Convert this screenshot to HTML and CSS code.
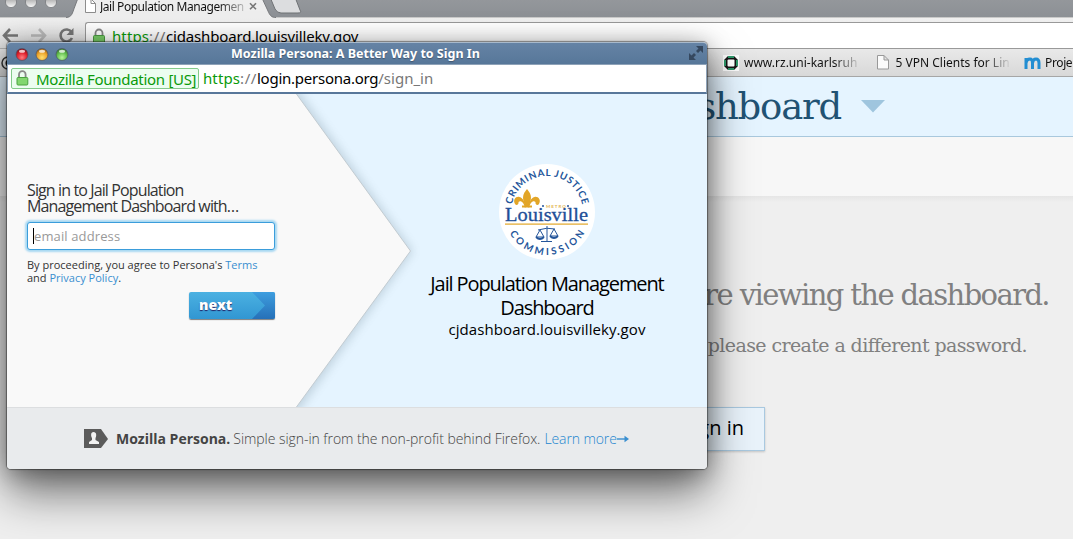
FILE: index.html
```
<!DOCTYPE html>
<html lang="en">
<head>
<meta charset="utf-8">
<title>Jail Population Management Dashboard</title>
<link rel="stylesheet" href="styles.css">
</head>
<body>
<div class="browser">
  <div class="tabstrip">
    <svg width="320" height="18" viewBox="0 0 320 18">
      <defs><linearGradient id="ball" x1="0" y1="0" x2="0" y2="1"><stop offset="0" stop-color="#999"/><stop offset="1" stop-color="#fafafa"/></linearGradient></defs>
      <path d="M66 18 C72 17 72 14 75 6 L78 -2 H262 L269 13 C271 17 273 18 276 18 Z" fill="#eee"/>
      <path d="M66 17.5 C72 17 72 14 75 6 L78 -2 M262 -2 L268 11 C270 16 272 17.500 276 17.500" fill="none" stroke="#77797c"/>
      <path d="M270 -3 L275 9 Q277 13 281 13 H298 Q302 13 300 10 L295 -3 Z" fill="#dcdddf" stroke="#6f7275"/>
      <g fill="url(#ball)" stroke="#777a7d" stroke-width=".8"><circle cx="11" cy="2" r="5.600"/><circle cx="31" cy="2" r="5.600"/><circle cx="51" cy="2" r="5.600"/></g>
      <path d="M85.500 -2 V12.500 H95.500 V3.500 L91 -1 V3.500 H95.500" fill="#fff" stroke="#8d8d8d"/>
      <path d="M250 3.300 L256 9.300 M256 3.300 L250 9.300" stroke="#777" stroke-width="1.600"/>
    </svg>
    <span class="tab-title">Jail Population Managemen</span>
  </div>
  <div class="toolbar">
    <svg class="nav" width="85" height="30" viewBox="0 0 85 30">
      <path d="M4 16.500 H18 M10 10 L4 16.500 L10 23" fill="none" stroke="#777" stroke-width="2.600"/>
      <path d="M31 16.500 H45 M39 10 L45 16.500 L39 23" fill="none" stroke="#bbb" stroke-width="2.600"/>
      <path d="M71.500 13 A6 6 0 1 0 72 19" fill="none" stroke="#777" stroke-width="2.600"/><path d="M73.500 9 V16 H66.500 Z" fill="#777"/>
    </svg>
    <div class="omnibox">
      <svg width="14" height="17" viewBox="0 0 14 17"><path d="M3.500 8 V5 a3.500 3.500 0 0 1 7 0 V8" fill="none" stroke="#888" stroke-width="1.800"/><rect x="1.500" y="7.500" width="11" height="8" rx="1" fill="#7bd069" stroke="#4c9c43"/></svg>
      <span class="address"><i class="secure">https</i><i class="dim">://</i>cjdashboard.louisvilleky.gov</span>
    </div>
  </div>
  <div class="bookmarks">
    <svg class="dial" width="14" height="16" viewBox="0 0 14 16"><circle cx="8" cy="8" r="6" fill="#ddd" stroke="#333" stroke-width="1.500"/><circle cx="9" cy="8" r="3.500" fill="#111"/></svg>
    <svg class="fav-ring" width="16" height="16" viewBox="0 0 16 16"><path d="M0 0H16V16H0Z" fill="#fafafa"/><path d="M5 1H11L15 5V11L11 15H5L1 11V5Z" fill="#151515"/><path d="M5 1H11V3H5ZM1 5H3V11H1ZM13 5H15V11H13ZM5 13H11V15H5Z" fill="#2c9568"/><rect x="4.500" y="4.500" width="7" height="7" rx="1" fill="#fff"/></svg>
    <span class="bm bm-uni">www.rz.uni-karlsruh</span>
    <svg class="fav-page" width="12" height="15" viewBox="0 0 12 15"><path d="M.5 .5 H7 L11.500 5 V14 H.5 Z M7 .5 V5 H11.500" fill="#fbfbfb" stroke="#999"/></svg>
    <span class="bm bm-vpn">5 VPN Clients for Lin</span>
    <svg class="fav-m" width="17" height="12" viewBox="0 0 17 12"><path d="M2 12 V1 M2 6 Q2.500 2 6 2 Q8.500 2 8.500 6 V12 M8.500 6 Q9 2 12 2 Q15 2 15 6 V12" fill="none" stroke="#238ed2" stroke-width="3"/></svg>
    <span class="bm bm-proj">Proje</span>
  </div>
  <div class="site">
    <div class="site-head">
      <span class="site-title">Dashboard</span>
      <svg width="24" height="13" viewBox="0 0 24 13"><path d="M0 0H24L12 12.500Z" fill="#9fc5de"/></svg>
    </div>
    <div class="subhead"></div>
    <div class="site-body">
      <p class="lead">are viewing the dashboard.</p>
      <p class="note">please create a different password.</p>
      <div class="site-button">Sign in</div>
    </div>
  </div>
</div>

<div class="popup">
  <div class="titlebar">
    <svg class="lights" width="62" height="22" viewBox="0 0 62 22">
      <defs>
        <radialGradient id="r" cx=".5" cy=".75" r=".7"><stop offset="0" stop-color="#ff7d80"/><stop offset=".6" stop-color="#e0202c"/><stop offset="1" stop-color="#8e1018"/></radialGradient>
        <radialGradient id="y" cx=".5" cy=".75" r=".7"><stop offset="0" stop-color="#ffe070"/><stop offset=".6" stop-color="#eea52c"/><stop offset="1" stop-color="#a56612"/></radialGradient>
        <radialGradient id="g" cx=".5" cy=".75" r=".7"><stop offset="0" stop-color="#b8f59a"/><stop offset=".6" stop-color="#63bf4e"/><stop offset="1" stop-color="#3c7f30"/></radialGradient>
      </defs>
      <g stroke="#4a5568" stroke-width=".7"><circle cx="15" cy="11.500" r="6" fill="url(#r)"/><circle cx="35" cy="11.500" r="6" fill="url(#y)"/><circle cx="55" cy="11.500" r="6" fill="url(#g)"/></g>
      <g fill="#fff" opacity=".75"><ellipse cx="15" cy="8.200" rx="3" ry="1.500"/><ellipse cx="35" cy="8.200" rx="3" ry="1.500"/><ellipse cx="55" cy="8.200" rx="3" ry="1.500"/></g>
    </svg>
    <span class="popup-title">Mozilla Persona: A Better Way to Sign In</span>
    <svg class="expand" width="16" height="16" viewBox="0 0 16 16"><path d="M8 1H15V8L12.500 5.500L10 8L8 6L10.500 3.500Z M1 8L3.500 10.500L6 8L8 10L5.500 12.500L8 15H1Z" fill="#35485f"/></svg>
  </div>
  <div class="urlbar">
    <div class="cert">
      <svg width="13" height="16" viewBox="0 0 13 16"><path d="M3 8 V4.500 a3.300 3.300 0 0 1 6.600 0 V8" fill="none" stroke="#888" stroke-width="1.800"/><rect x="1" y="7.500" width="10.800" height="7.500" rx="1" fill="#83d770" stroke="#4aa240"/></svg>
      <span>Mozilla Foundation [US]</span>
    </div>
    <span class="popup-address"><i class="secure">https</i><i class="dim">://</i>login.persona.org<i class="path">/sign_in</i></span>
  </div>
  <div class="content">
    <svg class="arrow" width="700" height="313" viewBox="0 0 700 313">
      <defs><filter id="soft" x="-10%" y="-10%" width="120%" height="120%"><feGaussianBlur stdDeviation="5"/></filter></defs>
      <path d="M0 -4H291L406 157L291 318H0Z" fill="#557080" opacity=".24" filter="url(#soft)"/>
      <path d="M-1 -2H288L403.500 157L288 315H-1Z" fill="#f9f9f9" stroke="#c3ccd2"/>
    </svg>
    <div class="form">
      <h1>Sign in to Jail Population<br>Management Dashboard with…</h1>
      <div class="field"><span class="caret"></span><span>email address</span></div>
      <p class="terms">By proceeding, you agree to Persona's <a>Terms</a><br>and <a>Privacy Policy</a>.</p>
      <div class="next"><span>next</span><svg width="26" height="27" viewBox="0 0 26 27"><defs><linearGradient id="nb" x1="0" y1="0" x2="0" y2="1"><stop offset="0" stop-color="#3e9edf"/><stop offset="1" stop-color="#2670b8"/></linearGradient></defs><path d="M3 0H26V27H3L16 13.500Z" fill="url(#nb)"/></svg></div>
    </div>
    <div class="brand">
      <svg class="seal" width="98" height="98" viewBox="-49 -49 98 98">
        <defs><path id="top" d="M-36 0 A36 36 0 0 1 36 0"/><path id="bot" d="M-43 0 A43 43 0 0 0 43 0"/></defs>
        <circle r="48" fill="#fff"/>
        <g font-family="Lato" font-weight="bold" font-size="9.800" fill="#24559a">
          <text textLength="98" lengthAdjust="spacing"><textPath href="#top" startOffset="7.500">CRIMINAL JUSTICE</textPath></text>
          <text textLength="91" lengthAdjust="spacing"><textPath href="#bot" startOffset="22">COMMISSION</textPath></text>
        </g>
        <g fill="#e2a527">
          <path d="M-20 -23 C-25 -17 -25 -14 -21.500 -5 H-18.500 C-15 -14 -15 -17 -20 -23Z"/>
          <path d="M-22 -4 C-23 -9 -26 -12 -28.500 -10 C-28 -7.500 -30.500 -6 -32 -8 C-34.500 -12 -31 -16 -27.500 -15 C-23.500 -14 -22 -9 -21.300 -5Z"/>
          <path d="M-18 -4 C-17 -9 -14 -12 -11.500 -10 C-12 -7.500 -9.500 -6 -8 -8 C-5.500 -12 -9 -16 -12.500 -15 C-16.500 -14 -18 -9 -18.700 -5Z"/>
          <rect x="-25" y="-6.500" width="10" height="2"/>
          <rect x="-42" y="11.500" width="83" height="1.200"/>
        </g>
        <text x="-1" y="-4.500" font-family="Lato" font-size="4.500" font-weight="bold" fill="#e2b34d" textLength="20">METRO</text>
        <circle cx="-4" cy="-6" r="1" fill="#24559a"/><circle cx="21" cy="-6" r="1" fill="#24559a"/>
        <text x="-42" y="8.500" font-family="Liberation Serif" font-size="19" fill="#1f4f98" stroke="#1f4f98" stroke-width=".3" textLength="83" lengthAdjust="spacingAndGlyphs">Louisville</text>
        <g fill="none" stroke="#24559a" stroke-width="1"><path d="M0 14V29M-6 29.500H5M-9 18Q0 15 8 17M-7 18L-11 25H-3ZM7 17L3 24H11Z"/><path d="M-11 25Q-7 29-3 25M3 24Q7 28 11 24" stroke-width="1.800"/></g>
      </svg>
      <h2>Jail Population Management<br>Dashboard</h2>
      <p>cjdashboard.louisvilleky.gov</p>
    </div>
  </div>
  <div class="footer">
    <svg width="24" height="20" viewBox="0 0 24 20"><path d="M0 0H17L24 10L17 19H0Z" fill="#5b5b5b"/><path d="M9.500 3C6.500 3 6.800 7 8 9V11L5 13V15H15V13L11.500 11V9C12.700 7 12.700 3 9.500 3Z" fill="#f2f2f2"/></svg>
    <strong>Mozilla Persona.</strong>
    <span class="tag">Simple sign-in from the non-profit behind Firefox.</span>
    <a class="learn">Learn more</a>
    <svg class="go" width="12" height="8" viewBox="0 0 12 8"><path d="M0 4H10" stroke="#3a8fd0" stroke-width="1.400"/><path d="M7.500 .8L12 4L7.500 7.200Z" fill="#3a8fd0"/></svg>
  </div>
</div>
</body>
</html>
```

FILE: styles.css
```
* { box-sizing: border-box; }
html, body { margin: 0; width: 1073px; height: 539px; overflow: hidden; }
body { position: relative; font-family: "Open Sans", sans-serif; }
h1, h2, p { margin: 0; font-weight: 400; }
i { font-style: normal; }
svg { display: block; flex: none; }
span, strong, a { white-space: nowrap; }

.browser { display: flex; flex-direction: column; height: 539px; font-family: "Noto Sans", sans-serif; }
.tabstrip { display: flex; height: 18px; background: linear-gradient(#94979b, #8c9095); border-bottom: 1px solid #c9c9c9; }
.tab-title { margin-left: -220px; margin-top: -2px; font-size: 12px; line-height: 17px; letter-spacing: -.45px; height: 17px; color: transparent; background: linear-gradient(90deg, #111 82%, #bbb); -webkit-background-clip: text; background-clip: text; }
.toolbar { display: flex; height: 31px; padding-top: 4px; background: linear-gradient(#f0f0f0, #e2e2e2); border-bottom: 1px solid #b5b5b5; }
.nav { margin-top: -3px; }
.omnibox { display: flex; flex: 1; gap: 6px; height: 27px; padding: 5px 0 0 6px; background: #fff; border: 1px solid #999; border-right: 0; border-radius: 3px 0 0 0; }
.address { font-size: 15px; line-height: 17px; letter-spacing: -.16px; color: #000; }
.secure { color: #0a9a0a; letter-spacing: .1px; }
.dim { color: #777; letter-spacing: .6px; }
.path { color: #777; letter-spacing: 0; }
.bookmarks { display: flex; height: 28px; align-items: center; background: linear-gradient(#e9e9e9, #d8d8d8); border-bottom: 1px solid #a6a6a6; }
.bm { font-size: 12px; line-height: 16px; overflow: hidden; color: transparent; background: linear-gradient(90deg, #111 78%, #ccc); -webkit-background-clip: text; background-clip: text; }
.fav-ring { margin-left: 709px; }
.bm-uni { width: 115px; margin-left: 5px; }
.fav-page { margin-left: 18px; }
.bm-vpn { width: 114px; margin-left: 7px; }
.fav-m { margin-left: 15px; }
.bm-proj { width: 28px; margin-left: 4px; letter-spacing: -.4px; background: #111; -webkit-background-clip: text; background-clip: text; }

.site { flex: 1; background: #efefef; font-family: "DejaVu Serif", serif; }
.site-head { display: flex; align-items: center; height: 60px; background: #e5f4ff; border-bottom: 1px solid #a9c8dd; }
.site-title { width: 841px; margin-right: 20px; text-align: right; font-size: 37px; line-height: 50px; letter-spacing: -1.200px; color: #215273; }
.subhead { height: 59px; background: #f7f7f7; }
.site-body { height: 343px; background: linear-gradient(#e6e6e6, #efefef 6px); }
.lead { width: 1049px; padding-top: 79px; text-align: right; font-size: 29px; line-height: 40px; letter-spacing: -1.600px; color: #808080; }
.note { width: 1027px; padding-top: 15px; text-align: right; font-size: 19px; line-height: 30px; letter-spacing: -.6px; color: #808080; }
.site-button { width: 110px; height: 44px; margin: 47px 0 0 655px; padding-right: 20px; text-align: right; font: 20px/40px "Open Sans", sans-serif; color: #000; background: #e9f3fb; border: 1px solid #a9c9e0; box-shadow: 0 1px 2px rgba(0,0,0,.18); }

.popup { position: absolute; left: 7px; top: 42px; width: 700px; height: 427px; display: flex; flex-direction: column; border-radius: 4px; box-shadow: 0 0 1px 1px rgba(0,0,0,.4), 0 24px 46px rgba(0,0,0,.52), 0 3px 24px rgba(0,0,0,.35); }
.titlebar { display: flex; height: 22px; background: linear-gradient(#6583a5, #577799); border-top: 1px solid #a8b9cb; border-radius: 4px 4px 0 0; }
.popup-title { width: 250px; margin-left: 162px; font: bold 12.500px/21px "Noto Sans", sans-serif; color: #fff; text-shadow: 0 1px 1px #40566f; }
.expand { margin: 2px 3px 0 auto; }
.urlbar { display: flex; height: 30px; padding: 3px 0 0 3px; gap: 5px; background: #fff; border: 1px solid #8ea2b8; border-bottom: 2px solid #58779a; font-family: "Noto Sans", sans-serif; font-size: 15px; line-height: 20px; }
.cert { flex: none; display: flex; gap: 7px; width: 188px; height: 21px; padding: 1px 0 0 4px; background: #ecfdf0; border: 1px solid #84ca8b; border-radius: 2px; color: #0a9a0a; line-height: 18px; letter-spacing: -.3px; }
.popup-address { letter-spacing: -.25px; margin-left: -1px; }
.content { position: relative; display: flex; height: 313px; background: #e5f4ff; overflow: hidden; }
.arrow { position: absolute; left: 0; top: 0; }
.form { position: relative; flex: none; width: 363px; padding: 88px 0 0 20px; }
.form h1 { font-size: 16px; line-height: 16px; letter-spacing: -.88px; color: #333; }
.field { display: flex; align-items: center; width: 248px; height: 28px; margin-top: 8px; padding-left: 5px; background: #fff; border: 1px solid #3b9ddb; border-radius: 3px; box-shadow: 0 0 2px 2px #a8d8f2; font-size: 13px; letter-spacing: .12px; color: #999; }
.caret { width: 1px; height: 16px; background: #000; }
.terms { margin-top: 8px; font-size: 11px; line-height: 13px; color: #333; }
.terms a, .learn { color: #3a8fd0; }
.next { display: flex; justify-content: space-between; width: 86px; height: 27px; margin: 8px 0 0 162px; padding-left: 10px; border-radius: 2px; background: linear-gradient(#4bb1e2, #3196d2); box-shadow: 0 1px 1px rgba(0,0,0,.5); overflow: hidden; font-size: 14px; font-weight: 800; line-height: 25px; color: #fff; text-shadow: 0 1px 1px #226; }
.brand { position: relative; flex: none; width: 354px; padding-top: 69px; }
.seal { margin-left: 128px; }
.brand h2, .brand p { text-align: center; color: #000; }
.brand h2 { margin-top: 11px; font-size: 20px; line-height: 24px; letter-spacing: -1.100px; }
.brand p { font-size: 15px; line-height: 18px; letter-spacing: .08px; }
.footer { display: flex; align-items: center; height: 62px; padding-left: 77px; background: #e9ebed; border-top: 1px solid #dcdee0; border-radius: 0 0 4px 4px; font-size: 14px; line-height: 20px; color: #444; }
.footer strong { margin-left: 8px; }
.tag { margin-left: 3px; font-weight: 300; letter-spacing: -.05px; }
.learn { margin-left: 4px; font-weight: 300; letter-spacing: -.1px; color: #2486cf; }
.go { margin-left: 0; }
```
